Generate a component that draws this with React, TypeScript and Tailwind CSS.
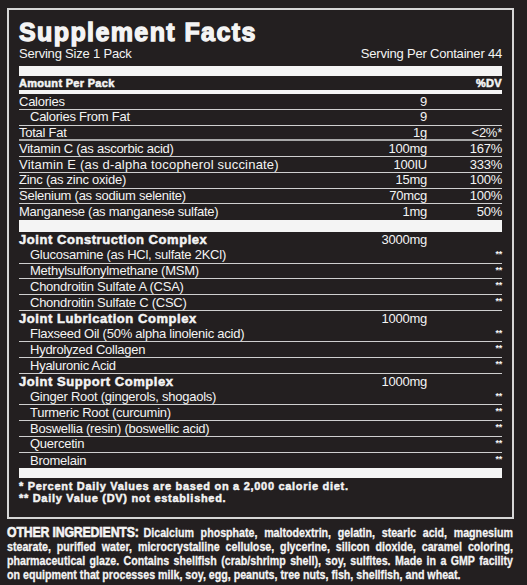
const nutrients = [
  { name: "Calories", amount: "9", dv: "", indent: false },
  { name: "Calories From Fat", amount: "9", dv: "", indent: true },
  { name: "Total Fat", amount: "1g", dv: "<2%*", indent: false, thick: true },
  { name: "Vitamin C (as ascorbic acid)", amount: "100mg", dv: "167%" },
  { name: "Vitamin E (as d-alpha tocopherol succinate)", amount: "100IU", dv: "333%", wide: true },
  { name: "Zinc (as zinc oxide)", amount: "15mg", dv: "100%" },
  { name: "Selenium (as sodium selenite)", amount: "70mcg", dv: "100%" },
  { name: "Manganese (as manganese sulfate)", amount: "1mg", dv: "50%", last: true },
];

const complexes = [
  {
    title: "Joint Construction Complex",
    amount: "3000mg",
    items: [
      "Glucosamine (as HCl, sulfate 2KCl)",
      "Methylsulfonylmethane (MSM)",
      "Chondroitin Sulfate A (CSA)",
      "Chondroitin Sulfate C (CSC)",
    ],
  },
  {
    title: "Joint Lubrication Complex",
    amount: "1000mg",
    items: [
      "Flaxseed Oil (50% alpha linolenic acid)",
      "Hydrolyzed Collagen",
      "Hyaluronic Acid",
    ],
  },
  {
    title: "Joint Support Complex",
    amount: "1000mg",
    items: [
      "Ginger Root (gingerols, shogaols)",
      "Turmeric Root (curcumin)",
      "Boswellia (resin) (boswellic acid)",
      "Quercetin",
      "Bromelain",
    ],
  },
];

// the label wraps the ingredient list at fixed points
const otherLines = [
  "stearate, purified water, microcrystalline cellulose, glycerine, silicon dioxide, caramel coloring,",
  "pharmaceutical glaze. Contains shellfish (crab/shrimp shell), soy, sulfites. Made in a GMP facility",
  "on equipment that processes milk, soy, egg, peanuts, tree nuts, fish, shellfish, and wheat.",
];

const heavy = "font-bold [-webkit-text-stroke:0.5px_#f4f4f4]";

const App = () => {
  return (
    <div className="w-[527px] h-[585px] bg-[#231f20] text-[#f4f4f4] font-['Liberation_Sans',Arial,sans-serif] pt-[8px] overflow-hidden">
      <div className="mx-[7px] w-[507px] border-2 border-[#d6d6d6] px-[10px] pt-[9px] pb-[13px]">
        <h1 className="text-[25px] leading-[27px] tracking-[1.4px] font-bold [-webkit-text-stroke:1.3px_#f4f4f4]">
          Supplement Facts
        </h1>
        <div className="flex justify-between text-[13px] leading-[16px] tracking-[-0.2px]">
          <span>Serving Size 1 Pack</span>
          <span>Serving Per Container 44</span>
        </div>

        <div className="h-[10px] bg-[#f4f4f4] mt-[4px]" />
        <div className={`flex justify-between text-[11px] leading-[14px] ${heavy} tracking-[0.3px]`}>
          <span>Amount Per Pack</span>
          <span>%DV</span>
        </div>
        <div className="h-[4px] bg-[#f4f4f4]" />

        {nutrients.map((n) => (
          <div
            key={n.name}
            className={`flex items-center h-[15.75px] text-[13px] ${
              n.last
                ? ""
                : n.thick
                  ? "border-b-2 border-[#a8a8a8]"
                  : "border-b border-[#cfcfcf]"
            }`}
          >
            <span
              className={`flex-1 ${n.indent ? "pl-[11px]" : ""} ${
                n.wide ? "tracking-[0.2px]" : "tracking-[-0.25px]"
              }`}
            >
              {n.name}
            </span>
            <span className="w-[80px] text-right tracking-[-0.25px]">{n.amount}</span>
            <span className="w-[75px] text-right tracking-[-0.25px]">{n.dv}</span>
          </div>
        ))}

        <div className="h-[12px] bg-[#f4f4f4]" />

        {complexes.map((c) => (
          <div key={c.title}>
            <div className="flex items-center h-[15.75px] text-[13px]">
              <span className={`flex-1 ${heavy} tracking-[0.55px]`}>{c.title}</span>
              <span className="w-[80px] text-right tracking-[-0.25px]">{c.amount}</span>
              <span className="w-[75px]" />
            </div>
            {c.items.map((item, i) => (
              <div
                key={item}
                className={`flex items-center h-[15.75px] text-[13px] tracking-[-0.25px] ${
                  i === c.items.length - 1 && c.title === "Joint Support Complex"
                    ? ""
                    : "border-b border-[#cfcfcf]"
                }`}
              >
                <span className="flex-1 pl-[11px]">{item}</span>
                <span className="w-[75px] self-start text-right text-[9px] leading-[12px] font-bold">
                  **
                </span>
              </div>
            ))}
          </div>
        ))}

        <div className="h-[10px] bg-[#f4f4f4]" />
        <div className="pt-[2px] text-[11px] leading-[12px] tracking-[0.7px] font-bold [-webkit-text-stroke:0.45px_#f4f4f4]">
          <p>* Percent Daily Values are based on a 2,000 calorie diet.</p>
          <p>** Daily Value (DV) not established.</p>
        </div>
      </div>

      <div className="mx-[7px] w-[506px] mt-[5px]">
        <div className="w-[617px] origin-top-left scale-x-[0.82] font-bold text-[13px] leading-[14px] whitespace-nowrap [-webkit-text-stroke:0.3px_#f4f4f4]">
          <p className="flex items-baseline justify-between">
            <span className="text-[15px] leading-[15px] tracking-[-0.2px] [-webkit-text-stroke:0.6px_#f4f4f4]">
              OTHER INGREDIENTS:
            </span>
            <span className="flex-1 ml-[6px] [text-align-last:justify]">
              Dicalcium phosphate, maltodextrin, gelatin, stearic acid, magnesium
            </span>
          </p>
          {otherLines.map((line, i) => (
            <p
              key={line}
              className={i === otherLines.length - 1 ? "" : "[text-align-last:justify]"}
            >
              {line}
            </p>
          ))}
        </div>
      </div>
    </div>
  );
};

export default App;
